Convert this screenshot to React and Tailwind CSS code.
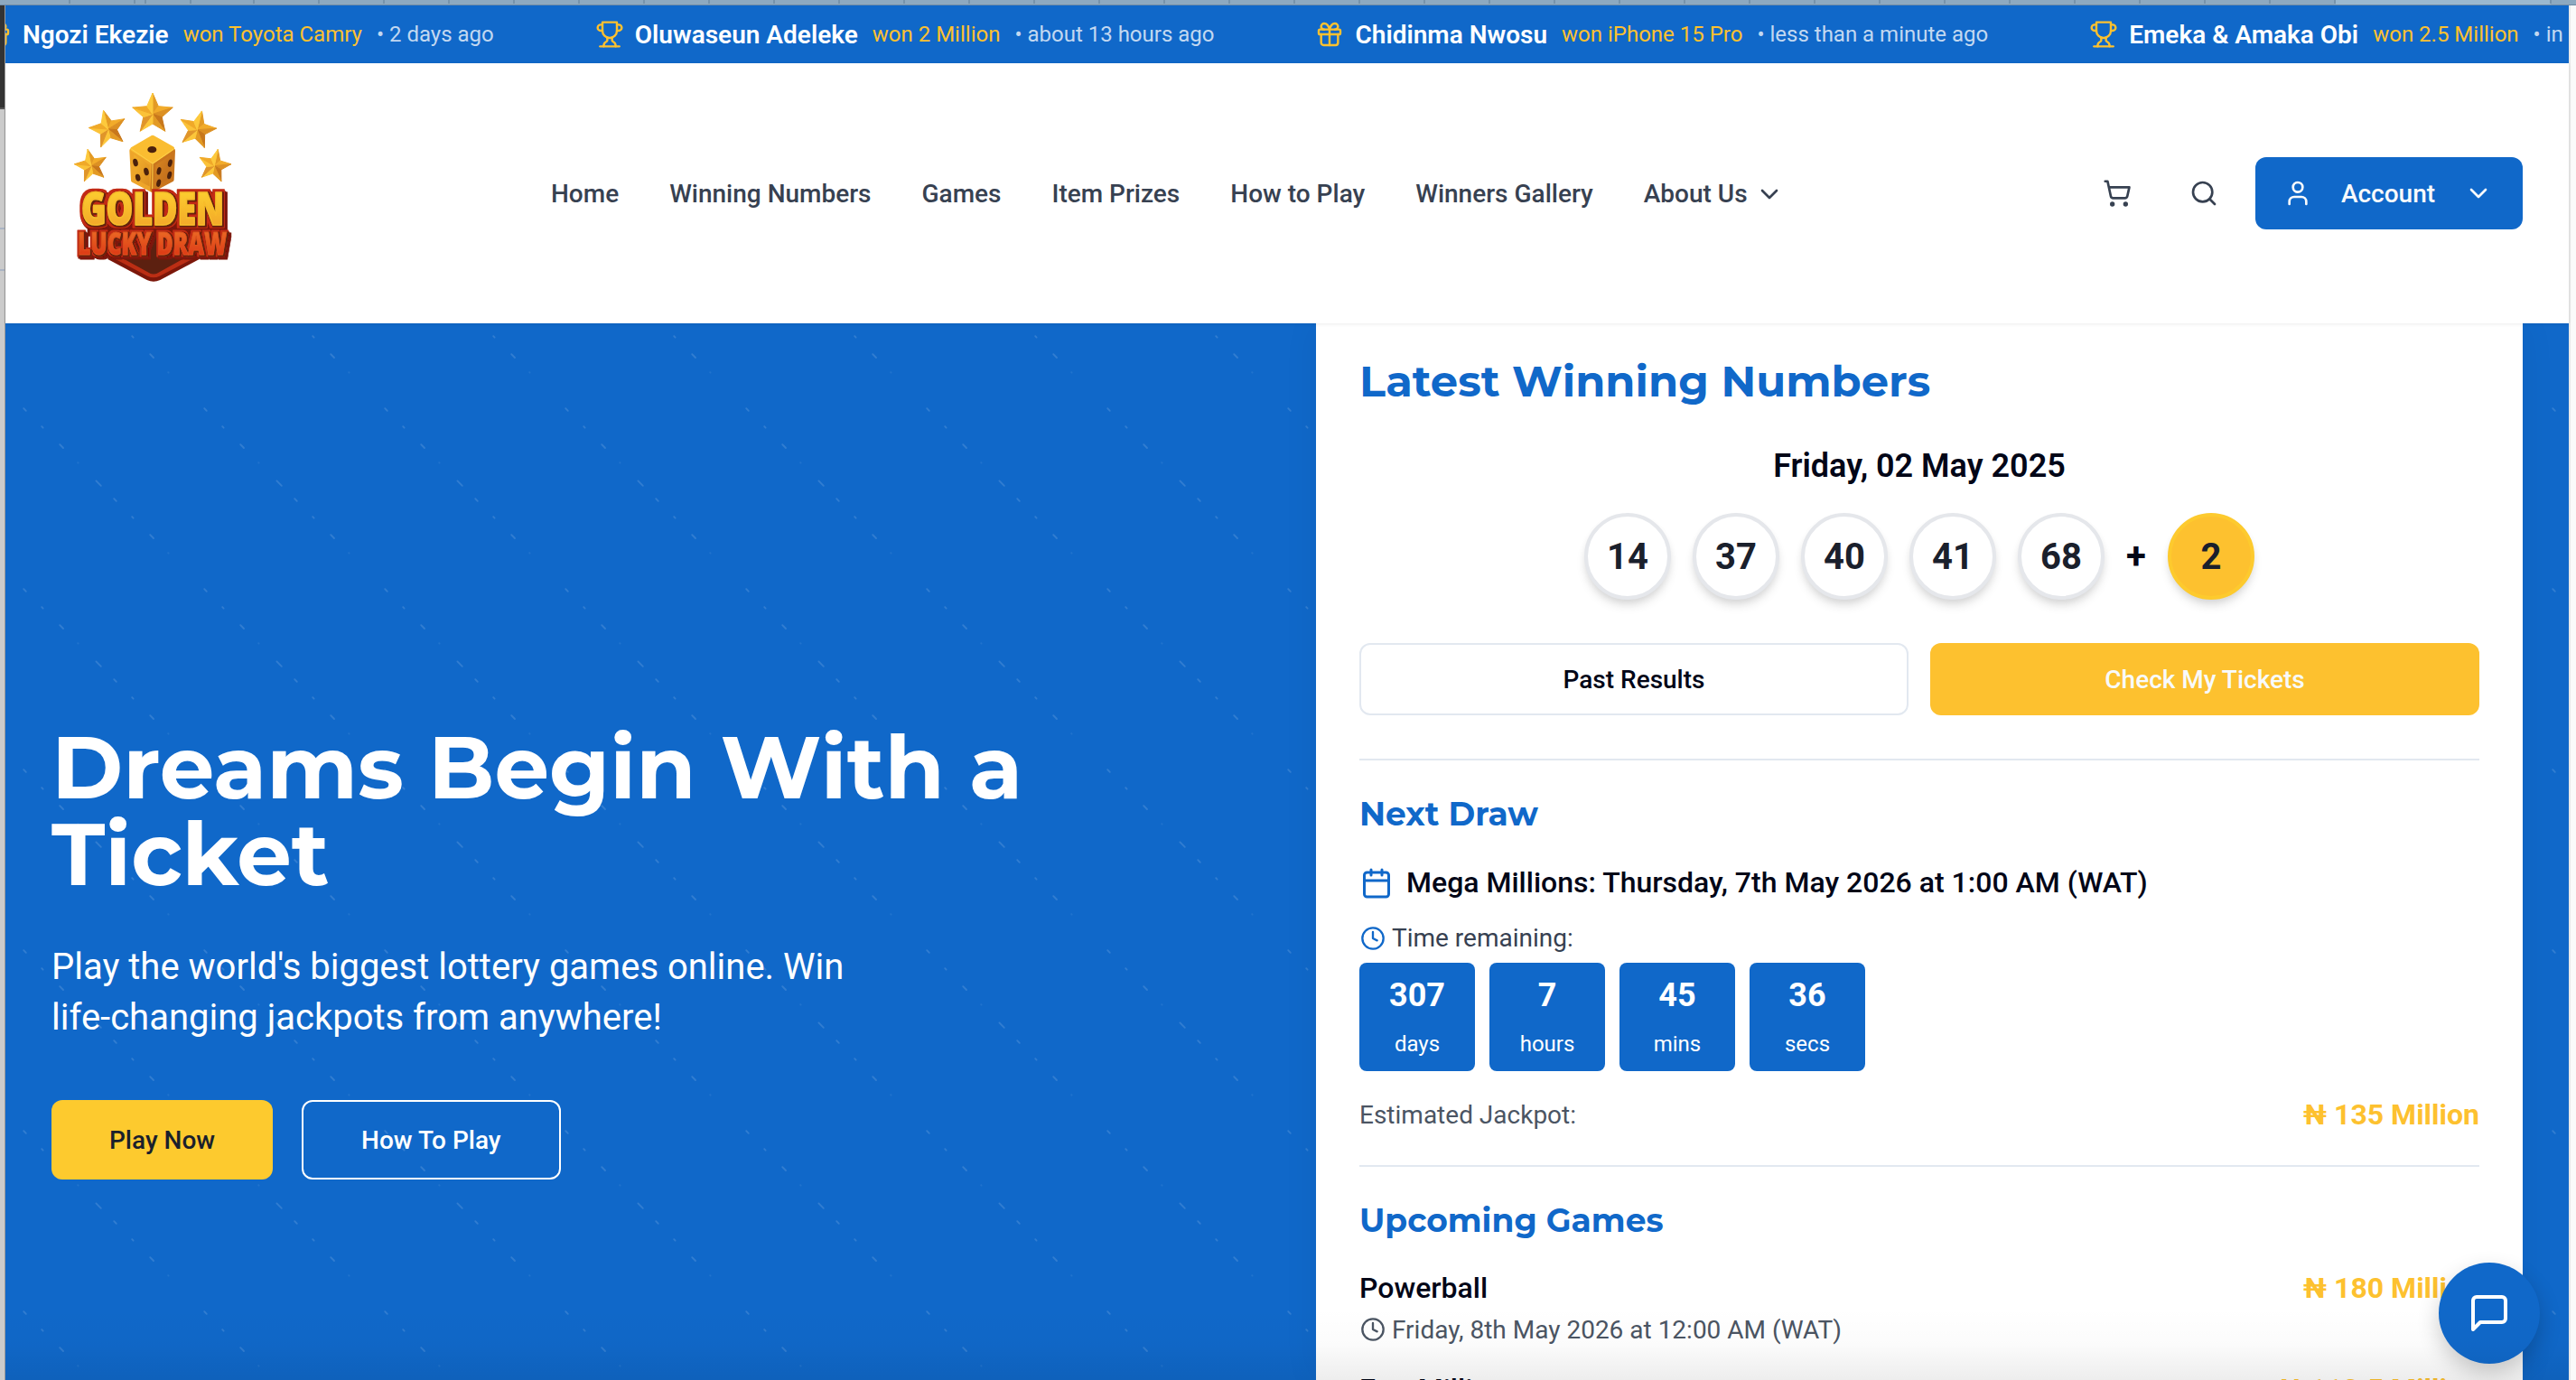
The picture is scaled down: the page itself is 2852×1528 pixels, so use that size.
import React from "react";

const BODY = "font-['Roboto','Noto_Sans',sans-serif]";
const TITLE = "font-['Montserrat','Inter',sans-serif] font-bold whitespace-nowrap";

function Icon({ size, className = "", children, stroke = 2 }) {
  return (
    <svg
      width={size}
      height={size}
      viewBox="0 0 24 24"
      fill="none"
      stroke="currentColor"
      strokeWidth={stroke}
      strokeLinecap="round"
      strokeLinejoin="round"
      className={"shrink-0 " + className}
    >
      {children}
    </svg>
  );
}

const Trophy = () => (
  <Icon size={32} stroke={1.8} className="text-[#fdc12f]">
    <path d="M6 9H4.5a2.5 2.5 0 0 1 0-5H6" />
    <path d="M18 9h1.5a2.5 2.5 0 0 0 0-5H18" />
    <path d="M4 22h16" />
    <path d="M10 14.66V17c0 .55-.47.98-.97 1.21C7.85 18.75 7 20.24 7 22" />
    <path d="M14 14.66V17c0 .55.47.98.97 1.21C16.15 18.75 17 20.24 17 22" />
    <path d="M18 2H6v7a6 6 0 0 0 12 0V2Z" />
  </Icon>
);

const Gift = () => (
  <Icon size={32} stroke={1.8} className="text-[#fdc12f]">
    <rect x="3" y="8" width="18" height="4" rx="1" />
    <path d="M12 8v13" />
    <path d="M19 12v7a2 2 0 0 1-2 2H7a2 2 0 0 1-2-2v-7" />
    <path d="M7.5 8a2.5 2.5 0 0 1 0-5A4.8 8 0 0 1 12 8a4.8 8 0 0 1 4.5-5 2.5 2.5 0 0 1 0 5" />
  </Icon>
);

const Chevron = () => (
  <Icon size={32}>
    <path d="m6 9 6 6 6-6" />
  </Icon>
);

const Clock = ({ className }) => (
  <Icon size={28} className={className}>
    <circle cx="12" cy="12" r="10" />
    <path d="M12 6v6l4 2" />
  </Icon>
);

const winners = [
  { icon: <Gift />, name: "Ngozi Ekezie", prize: "won Toyota Camry", when: "• 2 days ago" },
  { icon: <Trophy />, name: "Oluwaseun Adeleke", prize: "won 2 Million", when: "• about 13 hours ago" },
  { icon: <Gift />, name: "Chidinma Nwosu", prize: "won iPhone 15 Pro", when: "• less than a minute ago" },
  { icon: <Trophy />, name: "Emeka & Amaka Obi", prize: "won 2.5 Million", when: "• in" },
];

function Ticker() {
  return (
    <div className="flex h-16 shrink-0 items-center overflow-hidden bg-[#1068c9]">
      <div className="-ml-[25px] flex items-center gap-28 whitespace-nowrap">
        {winners.map((w) => (
          <div key={w.name} className="flex items-center">
            {w.icon}
            <span className="ml-3 pt-0.5 text-[28px] font-semibold leading-8 text-white">{w.name}</span>
            <span className="ml-4 text-2xl leading-8 text-[#fdc12f]">{w.prize}</span>
            <span className="ml-4 text-2xl leading-8 text-[#c2d8f1]">{w.when}</span>
          </div>
        ))}
      </div>
    </div>
  );
}

function Star({ cx, cy, r, rot = 0 }) {
  const pt = (k, rad) => {
    const a = ((-90 + rot + k * 36) * Math.PI) / 180;
    return [cx + rad * Math.cos(a), cy + rad * Math.sin(a)];
  };
  const facets = [];
  const fills = ["#e39a24", "#f2ab29", "#dc9023", "#c8771b", "#e39a24", "#fcc63a", "#e0952a", "#fbc238", "#f0a928", "#fdc93c"];
  for (let k = 0; k < 10; k++) {
    const a = pt(k, k % 2 ? r * 0.46 : r);
    const b = pt(k + 1, (k + 1) % 2 ? r * 0.46 : r);
    facets.push(
      <polygon
        key={k}
        points={`${cx},${cy} ${a.join(",")} ${b.join(",")}`}
        fill={fills[k]}
        stroke={fills[k]}
        strokeWidth="3"
        strokeLinejoin="round"
      />
    );
  }
  return <g>{facets}</g>;
}

function LogoWord({ size, length, children, ...rest }) {
  return (
    <text
      fontSize={size}
      textLength={length}
      lengthAdjust="spacingAndGlyphs"
      fontFamily="Open Sans, Noto Sans, sans-serif"
      fontWeight="800"
      strokeLinejoin="round"
      {...rest}
    >
      {children}
    </text>
  );
}

// Thick coloured rim with a darker slab offset below it
function Extrude({ id, rim }) {
  return (
    <filter id={id} x="-10%" y="-20%" width="120%" height="150%">
      <feMorphology in="SourceAlpha" operator="dilate" radius={rim} result="fat" />
      <feGaussianBlur in="fat" stdDeviation="1" result="soft" />
      <feOffset in="soft" dx="4" dy="5" result="s1" />
      <feOffset in="soft" dx="8" dy="10" result="s2" />
      <feMerge result="slab">
        <feMergeNode in="s1" />
        <feMergeNode in="s2" />
      </feMerge>
      <feFlood floodColor="#7c170a" />
      <feComposite in2="slab" operator="in" result="dark" />
      <feFlood floodColor="#c22c14" />
      <feComposite in2="soft" operator="in" result="red" />
      <feMorphology in="SourceAlpha" operator="dilate" radius="3" result="thin" />
      <feOffset in="thin" dx="3" dy="3" result="inner" />
      <feFlood floodColor="#66200f" />
      <feComposite in2="inner" operator="in" result="brown" />
      <feMerge>
        <feMergeNode in="dark" />
        <feMergeNode in="red" />
        <feMergeNode in="brown" />
        <feMergeNode in="SourceGraphic" />
      </feMerge>
    </filter>
  );
}

function Logo() {
  return (
    <svg width="220" height="240" viewBox="0 0 660 720" className="shrink-0">
      <defs>
        <linearGradient id="gold" x1="0" y1="0" x2="0" y2="1">
          <stop offset="0.2" stopColor="#fdd02f" />
          <stop offset="0.85" stopColor="#f2a529" />
        </linearGradient>
        <linearGradient id="ember" x1="0" y1="0" x2="0" y2="1">
          <stop offset="0.25" stopColor="#ea6a25" />
          <stop offset="0.8" stopColor="#dd3a17" />
        </linearGradient>
        <linearGradient id="dieLeft" x1="0" y1="0" x2="1" y2="1">
          <stop offset="0" stopColor="#f7b62e" />
          <stop offset="1" stopColor="#d98a20" />
        </linearGradient>
        <linearGradient id="dieRight" x1="0" y1="0" x2="1" y2="1">
          <stop offset="0" stopColor="#dd8d22" />
          <stop offset="1" stopColor="#b9631a" />
        </linearGradient>
        <Extrude id="extrudeGold" rim="8" />
        <Extrude id="extrudeEmber" rim="6" />
      </defs>
      <Star cx={327} cy={124} r={70} />
      <Star cx={179} cy={174} r={64} rot={-14} />
      <Star cx={475} cy={176} r={64} rot={14} />
      <Star cx={123} cy={296} r={56} rot={-12} />
      <Star cx={532} cy={296} r={56} rot={12} />
      <g strokeLinejoin="round" strokeWidth="14">
        <path d="M257 245 L324 290 L324 376 L262 344 Z" fill="url(#dieLeft)" stroke="#eea52a" />
        <path d="M395 245 L330 290 L326 376 L391 342 Z" fill="url(#dieRight)" stroke="#c9751d" />
        <path d="M327 201 L392 238 L327 282 L260 240 Z" fill="#fabd31" stroke="#fabd31" />
        <path d="M256 240 L327 288 L397 240 M327 288 L326 372" fill="none" stroke="#fdd24a" strokeWidth="3" />
      </g>
      <g fill="#4b210c">
        <ellipse cx="325" cy="242" rx="15" ry="11" />
        <ellipse cx="270" cy="285" rx="8" ry="13" transform="rotate(-14 270 285)" />
        <ellipse cx="306" cy="315" rx="8" ry="13" transform="rotate(-14 306 315)" />
        <ellipse cx="278" cy="335" rx="8" ry="12" transform="rotate(-14 278 335)" />
        <ellipse cx="385" cy="287" rx="7" ry="13" transform="rotate(14 385 287)" />
        <ellipse cx="348" cy="313" rx="7" ry="13" transform="rotate(14 348 313)" />
        <ellipse cx="383" cy="327" rx="7" ry="13" transform="rotate(14 383 327)" />
        <ellipse cx="347" cy="353" rx="7" ry="13" transform="rotate(14 347 353)" />
      </g>
      <path d="M178 606 L308 675 Q330 686 352 675 L482 606 L482 560 L178 560 Z" fill="#7c170a" />
      <path d="M185 596 L310 662 Q330 671 350 662 L474 598 L474 540 L185 540 Z" fill="#bb2e14" />
      <path d="M207 592 L316 652 Q330 659 344 652 L452 592 L520 500 L110 500 Z" fill="#5c2010" />
      <path d="M110 470 H555 V530 H110 Z" fill="#7c170a" />
      <LogoWord x="90" y="491" size={150} length={474} fill="url(#gold)" stroke="#f8bb2c" strokeWidth="5" filter="url(#extrudeGold)">
        GOLDEN
      </LogoWord>
      <LogoWord x="78" y="590" size={106} length={496} fill="url(#ember)" stroke="#e2521e" strokeWidth="3" filter="url(#extrudeEmber)">
        LUCKY DRAW
      </LogoWord>
    </svg>
  );
}

const links = ["Home", "Winning Numbers", "Games", "Item Prizes", "How to Play", "Winners Gallery"];

function Header() {
  return (
    <header className="relative z-10 flex h-72 shrink-0 items-center bg-white pl-[54px] pr-[51px] text-[28px] font-medium text-[#374151] shadow-[0_1px_4px_rgba(0,0,0,0.08)]">
      <div className="-mt-[18px] flex">
        <Logo />
      </div>
      <nav className="ml-[330px] flex items-center gap-14 whitespace-nowrap pt-0.5">
        {links.map((l) => (
          <a key={l}>{l}</a>
        ))}
        <a className="flex items-center gap-2">
          About Us
          <Chevron />
        </a>
      </nav>
      <div className="ml-auto flex items-center">
        <button className="mr-4 flex size-20 items-center justify-center">
          <Icon size={32}>
            <circle cx="8" cy="21" r="1" />
            <circle cx="19" cy="21" r="1" />
            <path d="M2.05 2.05h2l2.66 12.42a2 2 0 0 0 2 1.58h9.78a2 2 0 0 0 1.95-1.57l1.65-7.43H5.12" />
          </Icon>
        </button>
        <button className="mr-[17px] flex size-20 items-center justify-center">
          <Icon size={32}>
            <circle cx="11" cy="11" r="8" />
            <path d="m21 21-4.3-4.3" />
          </Icon>
        </button>
        <button className="flex h-20 w-[296px] items-center justify-between rounded-xl bg-[#1068c9] pl-[31px] pr-[33px] text-[#f8fafc]">
          <Icon size={32}>
            <path d="M19 21v-2a4 4 0 0 0-4-4H9a4 4 0 0 0-4 4v2" />
            <circle cx="12" cy="7" r="4" />
          </Icon>
          <span className="pt-0.5">Account</span>
          <Chevron />
        </button>
      </div>
    </header>
  );
}

// [x, y, length] of every diagonal fleck inside one 200px tile
const flecks = [
  [140.2, 14.2, 1.4],
  [160.2, 34.2, 3.8],
  [180.2, 54.2, 0.4],
  [20.2, 94.2, 2.6],
  [40.2, 114.2, 1.4],
  [60.2, 134.2, 3.8],
  [80.2, 154.2, 0.4],
  [100.4, 174.4, 5.4],
  [120.2, 194.2, 2.6],
];

function Flecks() {
  return (
    <svg className="absolute inset-0 h-full w-full">
      <defs>
        <pattern id="flecks" width="200" height="200" patternUnits="userSpaceOnUse">
          {flecks.map(([x, y, l]) => (
            <path
              key={x}
              d={`M${x} ${y}l${l} ${l}`}
              stroke="#ffffff"
              strokeOpacity={l < 1 ? 0.07 : 0.14}
              strokeWidth="1.8"
              strokeLinecap="round"
            />
          ))}
        </pattern>
      </defs>
      <rect width="100%" height="100%" fill="url(#flecks)" />
    </svg>
  );
}

function Ball({ n, gold }) {
  return (
    <span
      className={
        "flex size-24 items-center justify-center rounded-full border-4 pt-0.5 text-[40px] font-bold leading-none text-[#1a202c] shadow-[0_8px_12px_-2px_rgba(0,0,0,0.12),0_4px_8px_-2px_rgba(0,0,0,0.08)] " +
        (gold ? "border-[#fdca2e] bg-[#fdc12f]" : "border-[#e5e7eb] bg-white")
      }
    >
      {n}
    </span>
  );
}

function SubTitle({ children }) {
  return <h3 className={TITLE + " text-4xl leading-10 text-[#1068c9]"}>{children}</h3>;
}

function ResultsCard() {
  return (
    <section className="relative w-[1336px] shrink-0 bg-white px-12 pt-9 text-[#020617] shadow-[0_0_40px_rgba(0,0,0,0.05)]">
      <h2 className={TITLE + " text-5xl leading-[56px] text-[#1068c9]"}>Latest Winning Numbers</h2>
      <p className="mt-[46px] text-center text-4xl font-semibold leading-10">Friday, 02 May 2025</p>
      <div className="mt-8 flex items-center justify-center gap-6">
        {[14, 37, 40, 41, 68].map((n) => (
          <Ball key={n} n={n} />
        ))}
        <span className="w-[22px] text-center text-[40px] font-bold leading-none">+</span>
        <Ball n={2} gold />
      </div>
      <div className="mt-12 grid grid-cols-2 gap-6 text-[28px] font-medium">
        <button className="h-20 rounded-xl border-2 border-[#e2e8f0] pt-0.5">Past Results</button>
        <button className="h-20 rounded-xl bg-[#fdc12f] pt-0.5 text-[#f8fafc]">Check My Tickets</button>
      </div>
      <div className="mt-12 border-t-2 border-[#e2e8f0] pt-[39px]">
        <SubTitle>Next Draw</SubTitle>
        <div className="mt-[39px] flex h-9 items-center gap-[15px] pl-px text-[32px] font-medium">
          <Icon size={36} className="text-[#1068c9]">
            <path d="M8 2v4M16 2v4M3 10h18" />
            <rect x="3" y="4" width="18" height="18" rx="2" />
          </Icon>
          <span className="pb-0.5 leading-9">Mega Millions: Thursday, 7th May 2026 at 1:00 AM (WAT)</span>
        </div>
        <div className="mt-[23px] flex h-10 items-center gap-[7px] pl-px text-[28px] text-[#374151]">
          <Clock className="text-[#1068c9]" />
          Time remaining:
        </div>
        <div className="mt-[7px] flex gap-4 text-center text-white">
          {[
            ["307", "days"],
            ["7", "hours"],
            ["45", "mins"],
            ["36", "secs"],
          ].map(([n, u]) => (
            <div key={u} className="h-[120px] w-32 rounded-lg bg-[#1068c9] pt-4">
              <div className="text-4xl font-bold leading-10">{n}</div>
              <div className="mt-[18px] text-2xl leading-8">{u}</div>
            </div>
          ))}
        </div>
        <div className="mt-6 flex items-center justify-between leading-[46px]">
          <span className="pt-0.5 text-[28px] text-[#4b5563]">Estimated Jackpot:</span>
          <span className="text-[32px] font-bold text-[#fdc12f]">₦ 135 Million</span>
        </div>
      </div>
      <div className="mt-8 border-t-2 border-[#e2e8f0] pt-[39px]">
        <SubTitle>Upcoming Games</SubTitle>
        <div className="mt-[31px] flex items-center justify-between text-[32px] leading-[48px]">
          <span className="font-medium">Powerball</span>
          <span className="font-bold text-[#fdc12f]">₦ 180 Million</span>
        </div>
        <div className="mt-0.5 flex h-10 items-center gap-[7px] pl-px text-[28px] text-[#4b5563]">
          <Clock />
          <span className="pt-0.5">Friday, 8th May 2026 at 12:00 AM (WAT)</span>
        </div>
        <div className="mt-[22px] flex items-center justify-between text-[32px] leading-[48px]">
          <span className="font-medium">EuroMillions</span>
          <span className="font-bold text-[#fdc12f]">₦ 112.5 Million</span>
        </div>
      </div>
    </section>
  );
}

function Hero() {
  return (
    <main className="relative flex min-h-0 flex-1 overflow-hidden bg-[#1068c9]">
      <Flecks />
      <div className="relative w-[1451px] shrink-0 pl-[51px] pt-[444px] text-white">
        <h1 className={TITLE + " text-8xl leading-[96px]"}>
          Dreams Begin With a
          <br />
          Ticket
        </h1>
        <p className="mt-[49px] text-[40px] leading-[56px]">
          Play the world's biggest lottery games online. Win
          <br />
          life-changing jackpots from anywhere!
        </p>
        <div className="mt-[63px] flex gap-8 text-[28px] font-medium">
          <button className="h-[88px] rounded-xl bg-[#fdca2e] px-16 pt-0.5 text-[#1a202c]">Play Now</button>
          <button className="h-[88px] rounded-xl border-2 border-white px-16 pt-0.5">How To Play</button>
        </div>
      </div>
      <ResultsCard />
    </main>
  );
}

const tabEdges = [77, 149, 161, 211];
for (let x = 281; x <= 2585; x += 72) tabEdges.push(x);
tabEdges.push(2824);

function WindowEdge() {
  return (
    <svg width="2852" height="6" className="block shrink-0">
      <rect width="2852" height="6" fill="#8da9c0" />
      <rect x="2586" width="238" height="5" fill="#9ab8cf" />
      {tabEdges.map((x) => (
        <rect key={x} x={x - 1} width="2" height="4" fill="#7693ab" />
      ))}
      <rect y="5" width="2852" height="1" fill="#6f8ba5" />
    </svg>
  );
}

export default function App() {
  return (
    <div className={"relative flex h-[1528px] w-[2852px] flex-col overflow-hidden bg-[#fafafa] " + BODY}>
      <WindowEdge />
      <div className="flex min-h-0 flex-1">
        <div className="flex w-1.5 shrink-0 flex-col border-r border-[#9a9a9a] bg-[#cbcbcb]">
          <div className="h-[115px] border-b-2 border-[#555] bg-[#333]" />
          <div className="mt-[131px] h-0.5 bg-[#aab4c4]" />
          <div className="mt-11 h-0.5 bg-[#aab4c4]" />
        </div>
        <div className="flex w-[2838px] shrink-0 flex-col">
          <Ticker />
          <Header />
          <Hero />
        </div>
        <div className="w-0.5 shrink-0 bg-[#e8e8e8]" />
      </div>
      <button className="absolute left-[2700px] top-[1398px] flex size-28 items-center justify-center rounded-full bg-[#1068c9] text-white shadow-[0_10px_24px_rgba(0,0,0,0.2)]">
        <Icon size={48}>
          <path d="M21 15a2 2 0 0 1-2 2H7l-4 4V5a2 2 0 0 1 2-2h14a2 2 0 0 1 2 2z" />
        </Icon>
      </button>
      <div className="pointer-events-none absolute bottom-0 left-1.5 right-2 h-20 bg-gradient-to-b from-transparent via-black/[0.015] to-black/[0.07]" />
    </div>
  );
}
